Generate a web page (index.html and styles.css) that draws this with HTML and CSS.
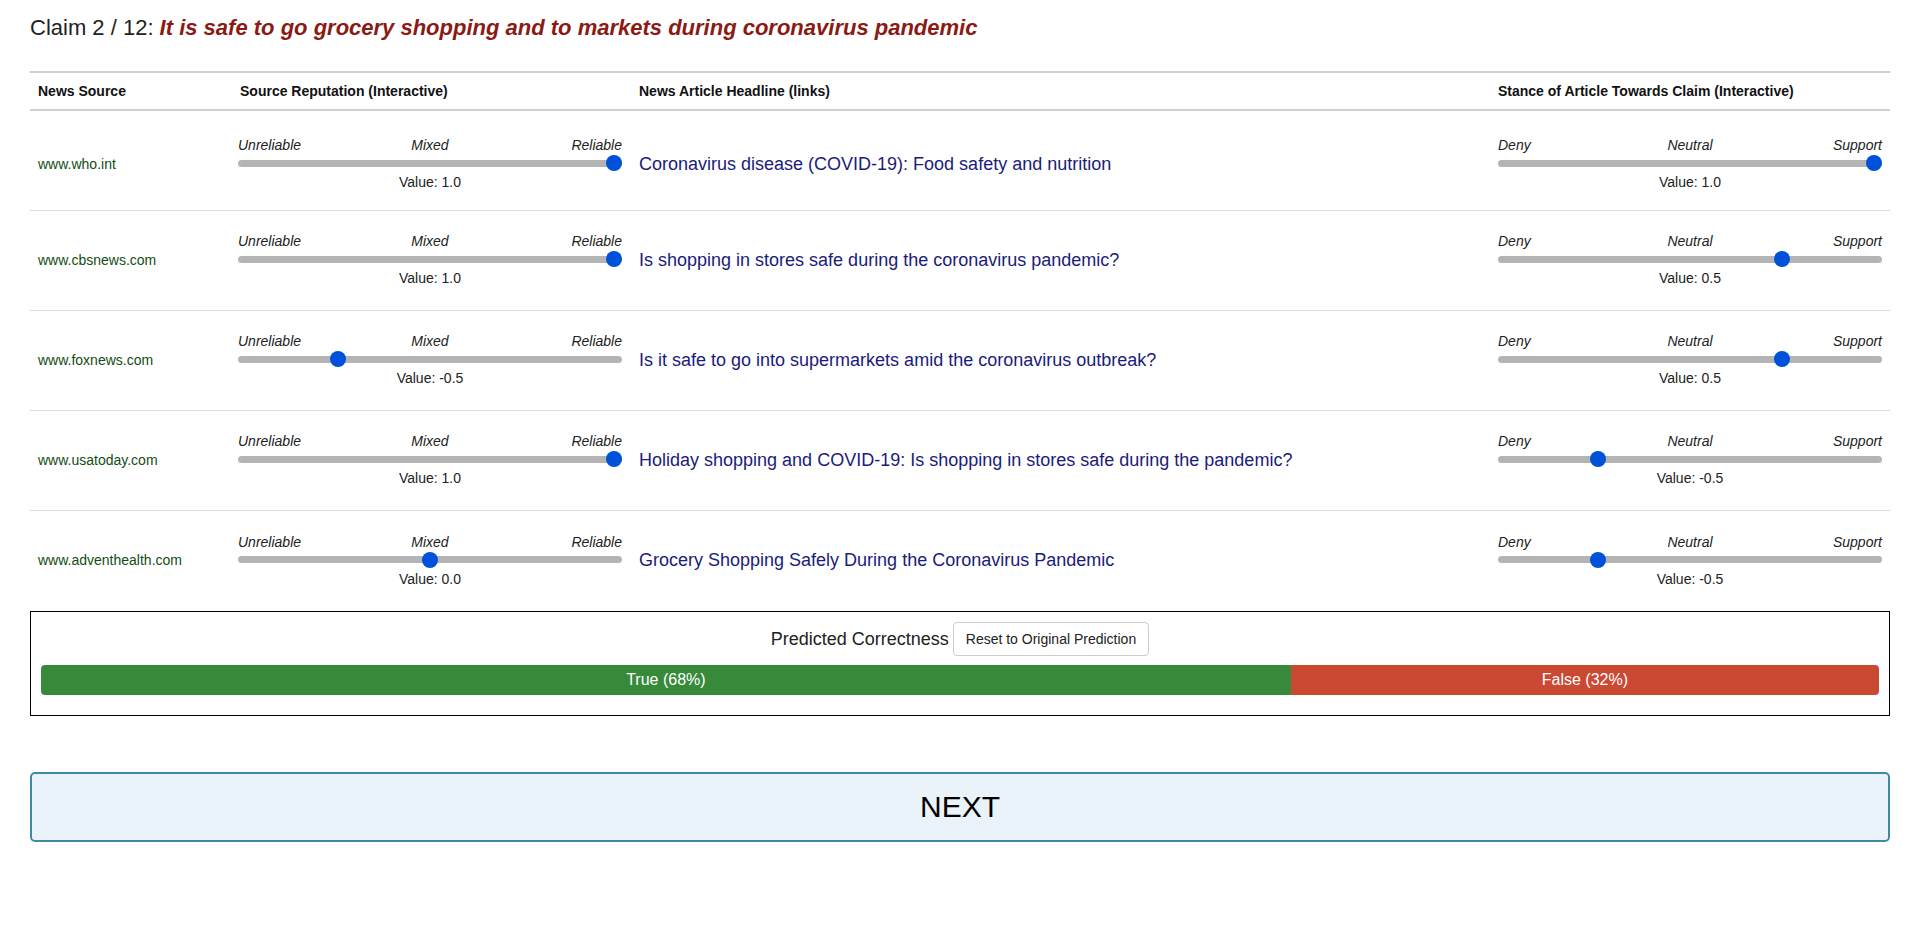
FILE: index.html
```html
<!DOCTYPE html>
<html lang="en">
<head>
<meta charset="utf-8">
<title>Claim 2 / 12</title>
<link rel="stylesheet" href="styles.css">
</head>
<body>
<div class="page">
  <h3 class="claim"><span class="claim-num">Claim 2 / 12: </span><span class="claim-text">It is safe to go grocery shopping and to markets during coronavirus pandemic</span></h3>

  <table class="sources">
    <colgroup>
      <col class="c-src"><col class="c-rep"><col class="c-head"><col class="c-stance">
    </colgroup>
    <thead>
      <tr>
        <th>News Source</th>
        <th>Source Reputation (Interactive)</th>
        <th>News Article Headline (links)</th>
        <th>Stance of Article Towards Claim (Interactive)</th>
      </tr>
    </thead>
    <tbody>
      <tr>
        <td class="src">www.who.int</td>
        <td><div class="slider rep"><div class="ticks"><span>Unreliable</span><span>Mixed</span><span>Reliable</span></div><input type="range" min="-1" max="1" step="0.5" value="1"><div class="val">Value: 1.0</div></div></td>
        <td><a class="headline" href="#">Coronavirus disease (COVID-19): Food safety and nutrition</a></td>
        <td><div class="slider"><div class="ticks"><span>Deny</span><span>Neutral</span><span>Support</span></div><input type="range" min="-1" max="1" step="0.5" value="1"><div class="val">Value: 1.0</div></div></td>
      </tr>
      <tr>
        <td class="src">www.cbsnews.com</td>
        <td><div class="slider rep"><div class="ticks"><span>Unreliable</span><span>Mixed</span><span>Reliable</span></div><input type="range" min="-1" max="1" step="0.5" value="1"><div class="val">Value: 1.0</div></div></td>
        <td><a class="headline" href="#">Is shopping in stores safe during the coronavirus pandemic?</a></td>
        <td><div class="slider"><div class="ticks"><span>Deny</span><span>Neutral</span><span>Support</span></div><input type="range" min="-1" max="1" step="0.5" value="0.5"><div class="val">Value: 0.5</div></div></td>
      </tr>
      <tr>
        <td class="src">www.foxnews.com</td>
        <td><div class="slider rep"><div class="ticks"><span>Unreliable</span><span>Mixed</span><span>Reliable</span></div><input type="range" min="-1" max="1" step="0.5" value="-0.5"><div class="val">Value: -0.5</div></div></td>
        <td><a class="headline" href="#">Is it safe to go into supermarkets amid the coronavirus outbreak?</a></td>
        <td><div class="slider"><div class="ticks"><span>Deny</span><span>Neutral</span><span>Support</span></div><input type="range" min="-1" max="1" step="0.5" value="0.5"><div class="val">Value: 0.5</div></div></td>
      </tr>
      <tr>
        <td class="src">www.usatoday.com</td>
        <td><div class="slider rep"><div class="ticks"><span>Unreliable</span><span>Mixed</span><span>Reliable</span></div><input type="range" min="-1" max="1" step="0.5" value="1"><div class="val">Value: 1.0</div></div></td>
        <td><a class="headline" href="#">Holiday shopping and COVID-19: Is shopping in stores safe during the pandemic?</a></td>
        <td><div class="slider"><div class="ticks"><span>Deny</span><span>Neutral</span><span>Support</span></div><input type="range" min="-1" max="1" step="0.5" value="-0.5"><div class="val">Value: -0.5</div></div></td>
      </tr>
      <tr>
        <td class="src">www.adventhealth.com</td>
        <td><div class="slider rep"><div class="ticks"><span>Unreliable</span><span>Mixed</span><span>Reliable</span></div><input type="range" min="-1" max="1" step="0.5" value="0"><div class="val">Value: 0.0</div></div></td>
        <td><a class="headline" href="#">Grocery Shopping Safely During the Coronavirus Pandemic</a></td>
        <td><div class="slider"><div class="ticks"><span>Deny</span><span>Neutral</span><span>Support</span></div><input type="range" min="-1" max="1" step="0.5" value="-0.5"><div class="val">Value: -0.5</div></div></td>
      </tr>
    </tbody>
  </table>

  <div class="prediction">
    <div class="pred-head"><span class="pred-label">Predicted Correctness</span> <button class="reset" type="button">Reset to Original Prediction</button></div>
    <div class="progress">
      <div class="bar bar-true" style="width:68%">True (68%)</div>
      <div class="bar bar-false" style="width:32%">False (32%)</div>
    </div>
  </div>

  <button class="next" type="button">NEXT</button>
</div>
</body>
</html>
```

FILE: styles.css
```css
html, body {
  margin: 0;
  padding: 0;
  background: #fff;
}

body {
  font-family: "Liberation Sans", Arial, sans-serif;
  font-size: 14px;
  line-height: 20px;
  color: #222;
}

.page {
  padding: 15px 30px 0;
}

.claim {
  margin: 0 0 30px;
  font-size: 22px;
  line-height: 26px;
  font-weight: normal;
}

.claim-num {
  color: #222;
}

.claim-text {
  color: #8b1a14;
  font-weight: bold;
  font-style: italic;
}

.sources {
  width: 100%;
  border-collapse: separate;
  border-spacing: 0;
  table-layout: fixed;
}

.c-src { width: 202px; }
.c-rep { width: 399px; }
.c-head { width: 859px; }
.c-stance { width: 400px; }

.sources th {
  text-align: left;
  font-size: 14px;
  font-weight: bold;
  line-height: 20px;
  padding: 8px;
  color: #111;
  border-top: 2px solid #cfcfcf;
  border-bottom: 2px solid #cfcfcf;
}

.sources td {
  height: 83px;
  padding: 7px 8px 9px;
  vertical-align: middle;
  border-bottom: 1px solid #dcdcdc;
}

.sources tbody tr:first-child td {
  padding-top: 11px;
  padding-bottom: 5px;
}

.sources tbody tr:last-child td {
  border-bottom: 0;
  height: 84px;
}

.src {
  color: #134d13;
  font-size: 14px;
}

.headline {
  color: #1b1b7c;
  font-size: 18px;
  line-height: 24px;
  text-decoration: none;
}

.slider {
  width: 384px;
}

.slider.rep {
  margin-left: -2px;
}

.ticks {
  display: grid;
  grid-template-columns: 1fr auto 1fr;
  font-style: italic;
  color: #222;
  line-height: 20px;
}

.ticks span:first-child {
  text-align: left;
}

.ticks span:nth-child(2) {
  text-align: center;
}

.ticks span:last-child {
  text-align: right;
}

.slider input[type="range"] {
  -webkit-appearance: none;
  appearance: none;
  display: block;
  width: 384px;
  height: 16px;
  margin: 0;
  padding: 0;
  background: transparent;
}

.slider input[type="range"]::-webkit-slider-runnable-track {
  height: 7px;
  border-radius: 4px;
  background: #b4b4b4;
}

.slider input[type="range"]::-webkit-slider-thumb {
  -webkit-appearance: none;
  appearance: none;
  width: 16px;
  height: 16px;
  margin-top: -4.5px;
  border: 0;
  border-radius: 50%;
  background: #0051da;
}

.val {
  margin-top: 1px;
  text-align: center;
  color: #222;
  line-height: 20px;
}

.prediction {
  border: 1px solid #000;
  padding: 9px 10px 20px;
}

.pred-head {
  text-align: center;
  line-height: 34px;
}

.pred-label {
  font-size: 18px;
  color: #222;
  vertical-align: middle;
}

.reset {
  font-family: "Liberation Sans", Arial, sans-serif;
  font-size: 14px;
  line-height: 20px;
  height: 34px;
  padding: 6px 12px;
  border: 1px solid #ccc;
  border-radius: 4px;
  background: #fff;
  color: #222;
  vertical-align: middle;
}

.progress {
  display: flex;
  height: 30px;
  margin-top: 9px;
  border-radius: 4px;
  overflow: hidden;
}

.bar {
  height: 30px;
  line-height: 30px;
  font-size: 16px;
  color: #fff;
  text-align: center;
}

.bar-true {
  background: #368a3a;
}

.bar-false {
  background: #cb4833;
}

.next {
  display: block;
  width: 100%;
  height: 70px;
  margin-top: 56px;
  font-family: "Liberation Sans", Arial, sans-serif;
  font-size: 30px;
  color: #000;
  background: #eaf3fa;
  border: 2px solid #3e8aa6;
  border-radius: 5px;
}
```
